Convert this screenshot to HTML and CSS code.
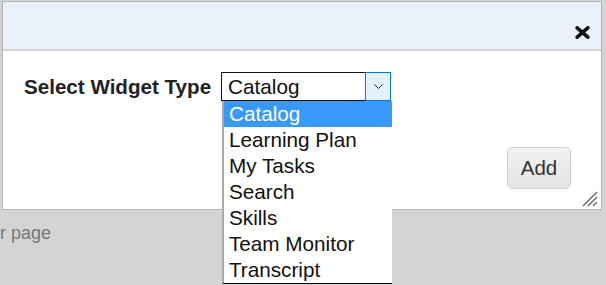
FILE: index.html
```html
<!DOCTYPE html>
<html lang="en">
<head>
    <meta charset="UTF-8">
    <title>Add Widget</title>
    <link rel="stylesheet" href="styles.css">
</head>
<body>
    <div class="page">
        <div class="dialog">
            <div class="dialog-header">
                <button class="close" title="Close">
                    <svg width="15" height="13" viewBox="0 0 15 13">
                        <path d="M2.2 1.8 L12.8 11.2 M12.8 1.8 L2.2 11.2" stroke="#111" stroke-width="3.6" stroke-linecap="round"/>
                    </svg>
                </button>
            </div>
            <div class="dialog-body">
                <div class="field">
                    <label>Select Widget Type</label>
                    <div class="select">
                        <span class="select-value">Catalog</span>
                        <span class="select-arrow">
                            <svg width="9" height="5" viewBox="0 0 9 5">
                                <path d="M0.5 0.5 L4.5 4.5 L8.5 0.5" fill="none" stroke="#222" stroke-width="1"/>
                            </svg>
                        </span>
                    </div>
                </div>
                <div class="actions">
                    <button class="add">Add</button>
                </div>
                <span class="resize">
                    <svg width="17" height="17" viewBox="0 0 17 17">
                        <path d="M16 2 L2 16 M16 7 L7 16 M16 12 L12 16" stroke="#666" stroke-width="1.4"/>
                    </svg>
                </span>
            </div>
        </div>
        <p class="below">r page</p>

        <!-- open list of the select -->
        <ul class="dropdown">
            <li class="active">Catalog</li>
            <li>Learning Plan</li>
            <li>My Tasks</li>
            <li>Search</li>
            <li>Skills</li>
            <li>Team Monitor</li>
            <li>Transcript</li>
        </ul>
    </div>
</body>
</html>
```

FILE: styles.css
```css
body {
    margin: 0;
    background-color: #d4d4d4;
    font-family: 'Liberation Sans', Arial, sans-serif;
    color: #222;
}
.page {
    position: relative;
    width: 606px;
    height: 285px;
    overflow: hidden;
}
.dialog {
    position: relative;
    margin: 1px 0 0 2px;
    width: 598px;
    height: 207px;
    border: 1px solid #b4b4b4;
    background-color: white;
    display: flex;
    flex-direction: column;
}
.dialog-header {
    height: 47px;
    background-color: #eaf1fa;
    border-bottom: 2px solid #d2d6db;
    display: flex;
    justify-content: flex-end;
    align-items: flex-end;
    padding-right: 11px;
}
.close {
    background: none;
    border: none;
    padding: 0;
    margin-bottom: 10px;
    line-height: 0;
    cursor: pointer;
}
.dialog-body {
    flex: 1;
    padding: 21px 30px 0 21px;
}
.field {
    display: flex;
    align-items: center;
    gap: 10px;
}
.field label {
    font-weight: bold;
    font-size: 20.6px;
    color: #222;
}
.select {
    display: flex;
    width: 170px;
    height: 29px;
    box-sizing: border-box;
    border: 1px solid #111;
}
.select-value {
    flex: 1;
    font-size: 20.7px;
    line-height: 27px;
    padding-left: 6px;
    color: #111;
}
.select-arrow {
    width: 24px;
    margin: -1px -1px -1px 0;
    background-color: #e5f1fb;
    border: 1px solid #0078d7;
    display: flex;
    align-items: center;
    justify-content: center;
}
.actions {
    display: flex;
    justify-content: flex-end;
    margin-top: 46px;
}
.add {
    width: 64px;
    height: 42px;
    font-family: inherit;
    font-size: 20.5px;
    color: #333;
    border: 1px solid #cfcfcf;
    border-radius: 5px;
    background: linear-gradient(#f2f2f2, #e4e4e4);
}
.resize {
    position: absolute;
    right: 3px;
    bottom: 2px;
    line-height: 0;
}
.below {
    margin: 13px 0 0 0;
    font-size: 18px;
    color: #777;
}
.dropdown {
    position: absolute;
    left: 222px;
    top: 101px;
    width: 168px;
    margin: 0;
    padding: 0;
    list-style: none;
    background-color: white;
    border-left: 2px solid #a9a9a9;
    border-bottom: 1px solid #000;
}
.dropdown li {
    height: 26px;
    line-height: 26px;
    padding-left: 5px;
    font-size: 20.7px;
    color: #111;
}
.dropdown li.active {
    background-color: #3999fb;
    color: white;
}
```
